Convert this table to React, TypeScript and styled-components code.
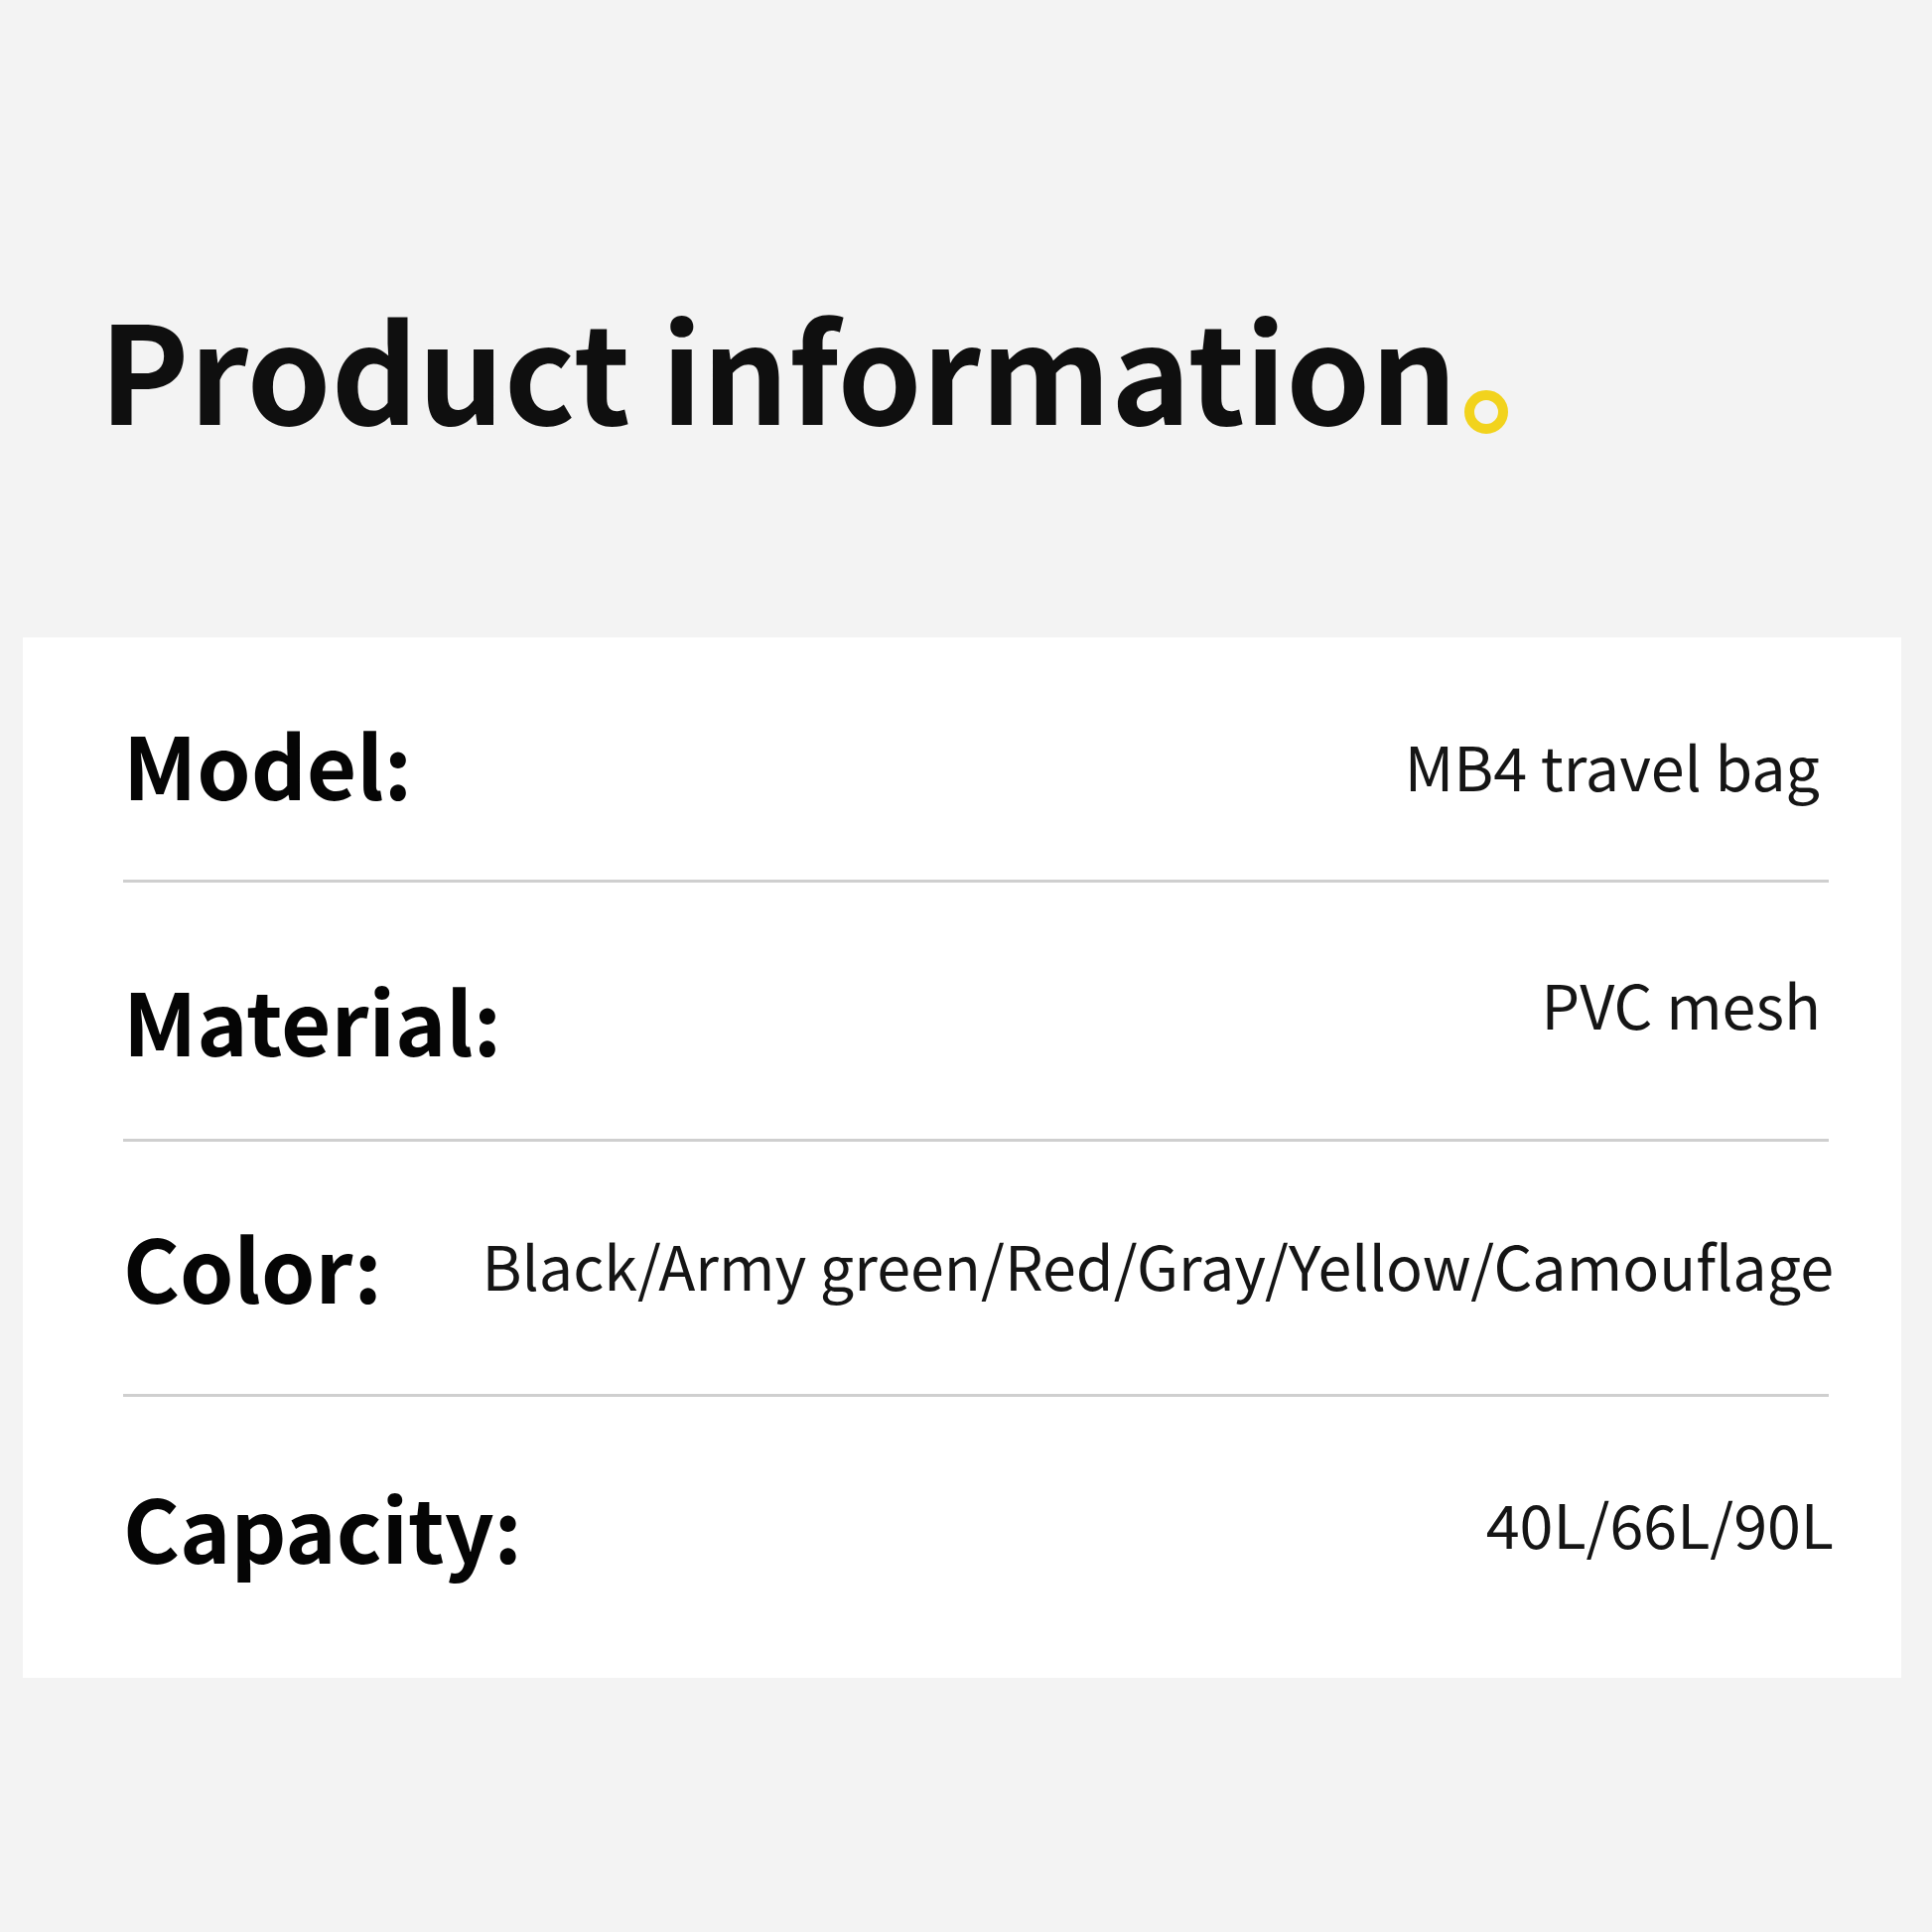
import * as React from 'react';
import styled, { createGlobalStyle } from 'styled-components';

const GlobalStyle = createGlobalStyle`
  html, body {
    margin: 0;
    padding: 0;
    background: #f3f3f3;
  }
  body {
    font-family: "Noto Sans CJK SC", "Noto Sans", sans-serif;
    color: #111;
  }
`;

interface Spec {
  label: string;
  value: string;
  height: number;
  labelTop: number;
  valueTop: number;
  valueShift: number;
}

// row heights and text offsets follow the original artwork, which is not quite regular
const specs: Spec[] = [
  { label: 'Model:', value: 'MB4 travel bag', height: 247, labelTop: 83, valueTop: 98, valueShift: 9 },
  { label: 'Material:', value: 'PVC mesh', height: 261, labelTop: 94, valueTop: 91, valueShift: 8 },
  {
    label: 'Color:',
    value: 'Black/Army green/Red/Gray/Yellow/Camouflage',
    height: 257,
    labelTop: 82,
    valueTop: 93,
    valueShift: -5,
  },
  { label: 'Capacity:', value: '40L/66L/90L', height: 283, labelTop: 87, valueTop: 96, valueShift: -5 },
];

const Page = styled.main`
  width: 1946px;
  min-height: 1946px;
  padding-top: 301px;
  box-sizing: border-box;
`;

const Title = styled.h1`
  margin: 0 0 205px 100px;
  font-size: 136px;
  font-weight: 700;
  line-height: 1;
  color: #0f0f0f;
  white-space: nowrap;
`;

const Dot = styled.span`
  display: inline-block;
  width: 44px;
  height: 44px;
  margin-left: 7px;
  box-sizing: border-box;
  border: 10px solid #f2d31d;
  border-radius: 50%;
  vertical-align: -9px;
`;

const Card = styled.section`
  margin-left: 23px;
  width: 1892px;
  background: #ffffff;
  padding: 0 73px 0 101px;
  box-sizing: border-box;
  display: flex;
  flex-direction: column;
`;

const Row = styled.div<{ $height: number; $last: boolean }>`
  height: ${(p) => p.$height}px;
  box-sizing: border-box;
  display: flex;
  align-items: flex-start;
  justify-content: space-between;
  border-bottom: ${(p) => (p.$last ? 'none' : '3px solid #cfcfcf')};
`;

const Label = styled.span<{ $top: number }>`
  margin-top: ${(p) => p.$top}px;
  font-size: 87px;
  font-weight: 700;
  line-height: 1;
  color: #050505;
  white-space: nowrap;
`;

const Value = styled.span<{ $top: number; $shift: number }>`
  margin-top: ${(p) => p.$top}px;
  margin-right: ${(p) => p.$shift}px;
  font-size: 61px;
  font-weight: 400;
  line-height: 1;
  color: #151515;
  white-space: nowrap;
`;

export default function App() {
  return (
    <>
      <GlobalStyle />
      <Page>
        <Title>
          Product information
          <Dot />
        </Title>
        <Card>
          {specs.map((s, i) => (
            <Row key={s.label} $height={s.height} $last={i === specs.length - 1}>
              <Label $top={s.labelTop}>{s.label}</Label>
              <Value $top={s.valueTop} $shift={s.valueShift}>
                {s.value}
              </Value>
            </Row>
          ))}
        </Card>
      </Page>
    </>
  );
}
